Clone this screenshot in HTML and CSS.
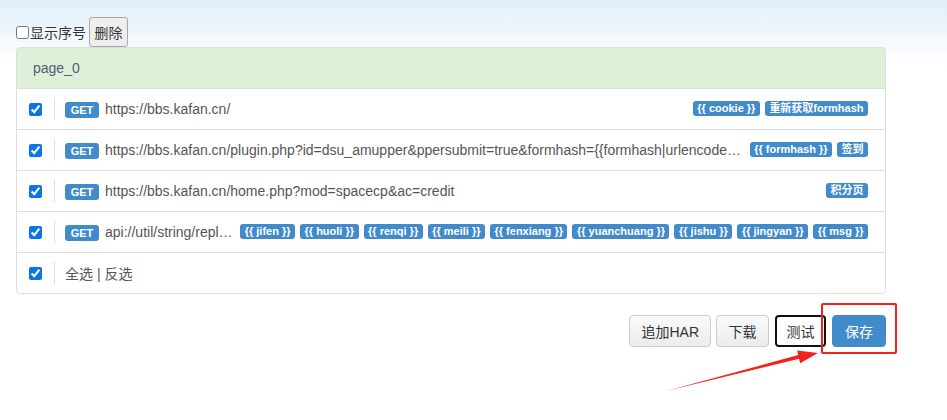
FILE: index.html
```html
<!DOCTYPE html>
<html lang="zh">
<head>
<meta charset="utf-8">
<title>HAR</title>
<link rel="stylesheet" href="styles.css">
</head>
<body>
<div class="page">
  <div class="toolbar">
    <label class="show-index"><input type="checkbox" class="cb-plain">显示序号</label>
    <button class="btn-del">删除</button>
  </div>
  <div class="panel">
    <div class="panel-heading">page_0</div>
    <div class="row">
      <input type="checkbox" class="cb" checked>
      <span class="sep"></span>
      <span class="get">GET</span>
      <span class="url">https://bbs.kafan.cn/</span>
      <span class="tags"><span class="tag">{{ cookie }}</span><span class="tag">重新获取formhash</span></span>
    </div>
    <div class="row">
      <input type="checkbox" class="cb" checked>
      <span class="sep"></span>
      <span class="get">GET</span>
      <span class="url">https://bbs.kafan.cn/plugin.php?id=dsu_amupper&amp;ppersubmit=true&amp;formhash={{formhash|urlencode}}&amp;infloat=yes&amp;handlekey=dsu_amupper&amp;inajax=1</span>
      <span class="tags"><span class="tag">{{ formhash }}</span><span class="tag">签到</span></span>
    </div>
    <div class="row">
      <input type="checkbox" class="cb" checked>
      <span class="sep"></span>
      <span class="get">GET</span>
      <span class="url">https://bbs.kafan.cn/home.php?mod=spacecp&amp;ac=credit</span>
      <span class="tags"><span class="tag">积分页</span></span>
    </div>
    <div class="row">
      <input type="checkbox" class="cb" checked>
      <span class="sep"></span>
      <span class="get">GET</span>
      <span class="url">api://util/string/replace?content={{content}}</span>
      <span class="tags"><span class="tag">{{ jifen }}</span><span class="tag">{{ huoli }}</span><span class="tag">{{ renqi }}</span><span class="tag">{{ meili }}</span><span class="tag">{{ fenxiang }}</span><span class="tag">{{ yuanchuang }}</span><span class="tag">{{ jishu }}</span><span class="tag">{{ jingyan }}</span><span class="tag">{{ msg }}</span></span>
    </div>
    <div class="row last">
      <input type="checkbox" class="cb" checked>
      <span class="sep"></span>
      <span class="select-links">全选 | 反选</span>
    </div>
  </div>
  <div class="actions">
    <button class="btn btn-har">追加HAR</button>
    <button class="btn btn-dl">下载</button>
    <button class="btn btn-focus">测试</button>
    <button class="btn btn-primary">保存</button>
  </div>
</div>
<div class="highlight"></div>
<svg class="arrow" width="947" height="420" viewBox="0 0 947 420">
  <polygon points="666,391 798.2,355.1 797.2,350.5 818,353 800.2,363.2 799,358.7" fill="#f5221b"/>
</svg>
</body>
</html>
```

FILE: styles.css
```css
html, body {
  margin: 0;
  padding: 0;
}
body {
  width: 947px;
  height: 420px;
  overflow: hidden;
  position: relative;
  font-family: "Liberation Sans", "Noto Sans CJK SC", sans-serif;
  font-size: 14px;
  color: #333;
  background: linear-gradient(to bottom, #def0fb 0px, #eef6fc 30px, #fbfdfe 55px, #ffffff 70px);
}
.page {
  padding: 17px 0 0 16px;
  width: 870px;
}
.toolbar {
  display: flex;
  align-items: center;
  height: 30px;
}
.show-index {
  display: flex;
  align-items: center;
  color: #333;
  font-size: 14px;
}
.cb-plain {
  margin: 0 1px 0 0;
  width: 13px;
  height: 13px;
}
.btn-del {
  margin-left: 3px;
  height: 30px;
  width: 39px;
  padding: 0;
  font-family: "Liberation Sans", "Noto Sans CJK SC", sans-serif;
  font-size: 14px;
  color: #333;
  background: #efefef;
  border: 1px solid #a8a8a8;
  border-radius: 3px;
  align-self: flex-start;
}
.panel {
  background: #fff;
  border: 1px solid #ddd;
  border-radius: 4px;
  overflow: hidden;
}
.panel-heading {
  height: 41px;
  line-height: 40px;
  padding-left: 16px;
  background: #dff0d8;
  color: #4b6073;
  font-size: 14px;
  border-bottom: 1px solid #ddd;
  box-sizing: border-box;
}
.row {
  display: flex;
  align-items: center;
  height: 41px;
  box-sizing: border-box;
  border-bottom: 1px solid #ddd;
  padding: 0 17px 0 12px;
}
.row.last {
  border-bottom: none;
  height: 40px;
}
.cb {
  margin: 0;
  width: 13px;
  height: 13px;
  flex-shrink: 0;
  accent-color: #0b75e8;
}
.sep {
  width: 1px;
  height: 22px;
  background: #ddd;
  margin: 0 10px 0 12px;
  flex-shrink: 0;
}
.get {
  flex-shrink: 0;
  background: #428bca;
  color: #fff;
  font-weight: bold;
  font-size: 11px;
  width: 34px;
  height: 16px;
  line-height: 16px;
  text-align: center;
  border-radius: 3px;
  margin-right: 6px;
  margin-top: 2px;
}
.url {
  flex: 1 1 auto;
  min-width: 0;
  white-space: nowrap;
  overflow: hidden;
  text-overflow: ellipsis;
  color: #555;
  font-size: 14px;
}
.tags {
  display: flex;
  gap: 5px;
  flex-shrink: 0;
  margin-left: 6px;
  margin-bottom: 2px;
}
.tag {
  background: #428bca;
  color: #fff;
  font-weight: bold;
  font-size: 11px;
  height: 15px;
  line-height: 15px;
  padding: 0 4.5px;
  border-radius: 3px;
  white-space: nowrap;
}
.select-links {
  color: #555;
  font-size: 14px;
}
.actions {
  display: flex;
  justify-content: flex-end;
  gap: 5px;
  margin-top: 21px;
}
.btn {
  height: 32px;
  padding: 0 12px;
  font-family: "Liberation Sans", "Noto Sans CJK SC", sans-serif;
  font-size: 14px;
  color: #333;
  background: linear-gradient(to bottom, #fafafa, #ececec);
  border: 1px solid #ccc;
  border-radius: 4px;
}
.btn-har {
  padding: 0 11px;
}
.btn-dl {
  padding: 0 11.5px;
}
.btn-focus {
  background: #fff;
  border: 2px solid #111;
  padding: 0 9.5px;
  margin-left: 1px;
}
.btn-primary {
  background: #428bca;
  border-color: #428bca;
  color: #fff;
  padding: 0 12px;
  margin-left: 1px;
}
.highlight {
  position: absolute;
  left: 821px;
  top: 303px;
  width: 72px;
  height: 47px;
  border: 2px solid #f0231c;
  border-radius: 2px;
}
.arrow {
  position: absolute;
  left: 0;
  top: 0;
  pointer-events: none;
}
```
